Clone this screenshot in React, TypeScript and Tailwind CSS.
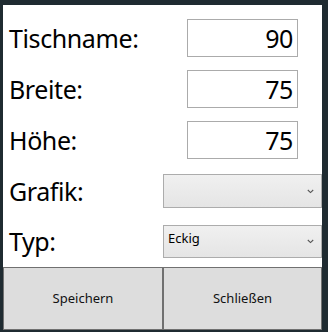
import React from "react";

const font = { fontFamily: '"Noto Sans", "Open Sans", "Liberation Sans", sans-serif' };
const bigFont = { fontFamily: '"Noto Sans", "Open Sans", "Liberation Sans", sans-serif', letterSpacing: "-0.4px" };

function Chevron() {
  return (
    <svg width="7" height="5" viewBox="0 0 7 5" className="block">
      <path d="M0.8 1 L3.5 3.6 L6.2 1" fill="none" stroke="#555" strokeWidth="1.1" />
    </svg>
  );
}

function TextRow({ label, value, mt }: { label: string; value: string; mt: string }) {
  return (
    <div className={`flex items-center h-[38px] ${mt}`}>
      <div className="w-[184px] pl-[6px] text-[25px] text-black leading-none" style={bigFont}>{label}</div>
      <div className="w-[111px] h-[38px] border border-[#ababab] bg-white flex items-center justify-end pr-[4px] text-[25px] text-black leading-none" style={bigFont}>
        {value}
      </div>
    </div>
  );
}

function ComboRow({ label, value, h, mt }: { label: string; value: string; h: string; mt: string }) {
  return (
    <div className={`flex items-center ${h} ${mt}`}>
      <div className="w-[160px] pl-[6px] text-[25px] text-black leading-none" style={bigFont}>{label}</div>
      <div className={`w-[159px] ${h} border border-[#acacac] bg-gradient-to-b from-[#f0f0f0] to-[#e5e5e5] flex items-start justify-between`}>
        <span className="text-[13px] text-black pl-[4px] pt-[4px] leading-[16px]">{value}</span>
        <span className="pr-[7px] self-center"><Chevron /></span>
      </div>
    </div>
  );
}

export default function App() {
  return (
    <div className="w-[328px] h-[332px] bg-[#1f2b31] pt-[5px] pl-[3px]" style={font}>
      <div className="w-[319px] h-[325px] bg-white flex flex-col">
        <TextRow label="Tischname:" value="90" mt="mt-[14px]" />
        <TextRow label="Breite:" value="75" mt="mt-[13px]" />
        <TextRow label="Höhe:" value="75" mt="mt-[13px]" />
        <ComboRow label="Grafik:" value="" h="h-[34px]" mt="mt-[15px]" />
        <ComboRow label="Typ:" value="Eckig" h="h-[33px]" mt="mt-[17px]" />
        <div className="flex mt-[9px] h-[63px]">
          <button className="w-[160px] h-full bg-[#dddddd] border border-[#707070] text-[13px] text-[#111]" style={font}>
            Speichern
          </button>
          <button className="w-[159px] h-full bg-[#dddddd] border border-[#707070] text-[13px] text-[#111]" style={font}>
            Schließen
          </button>
        </div>
      </div>
    </div>
  );
}
